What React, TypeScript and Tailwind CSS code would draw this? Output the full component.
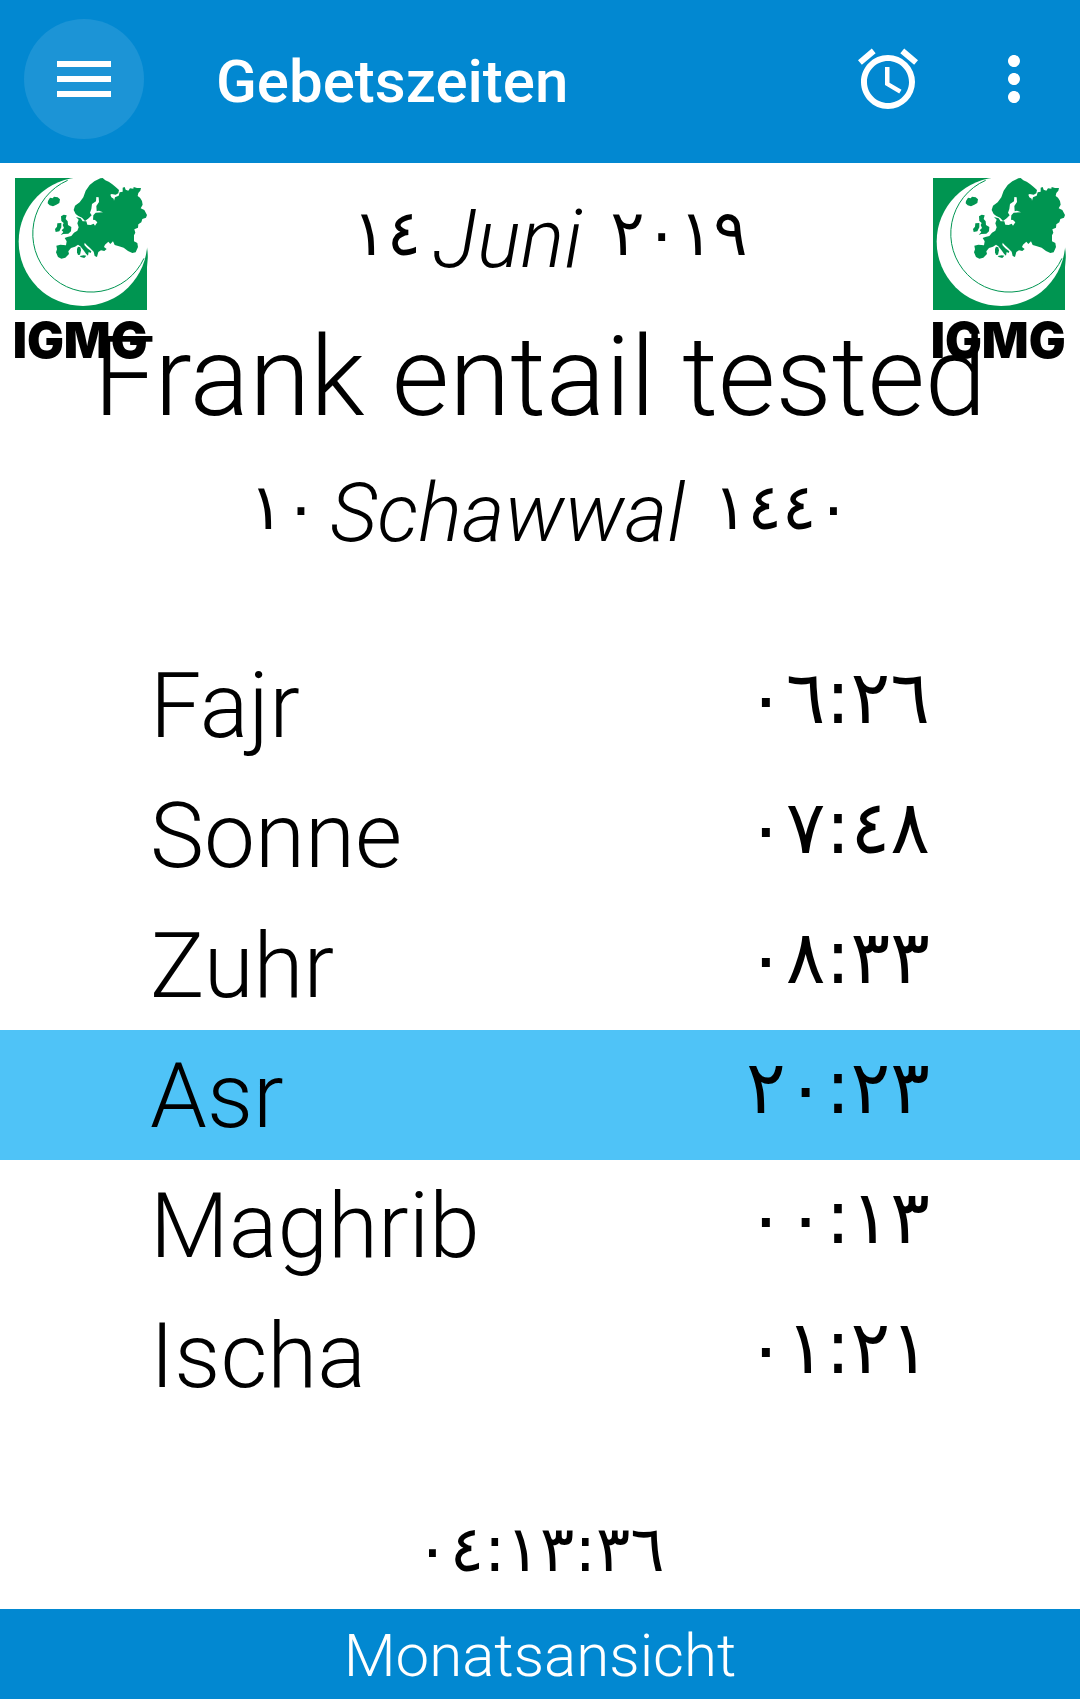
import React from "react";
import { MdAccessAlarm, MdMenu, MdMoreVert } from "react-icons/md";

const prayers = [
  { name: "Fajr", time: "٠٦:٢٦" },
  { name: "Sonne", time: "٠٧:٤٨" },
  { name: "Zuhr", time: "٠٨:٣٣" },
  { name: "Asr", time: "٢٠:٢٣", active: true },
  { name: "Maghrib", time: "٠٠:١٣" },
  { name: "Ischa", time: "٠١:٢١" },
];

function Logo() {
  return (
    <svg viewBox="45 39 396 544" className="w-[132px] overflow-visible" role="img" aria-label="IGMG">
      <rect x="45" y="39" width="396" height="396" fill="#009551" />
      <path d="M235 38H442V246L249 230Z" fill="#fff" />
      <circle cx="249" cy="230" r="193" fill="#fff" />
      <path d="M203 46A175 175 0 1 0 432 280" fill="none" stroke="#009551" strokeWidth="3" />
      <path d="M402 394A193 193 0 0 0 441 246V435H350Z" fill="#009551" />
      <path
        fill="#009551"
        d="M308 39L316 46L326 50L336 57L346 65L357 75L355 85L347 89L335 87L331 89L334 97L341 101L342 107L345 97L356 92L359 82L368 80L368 68L374 66L377 74L385 77L390 70L400 71L401 66L411 69L423 69L421 77L415 84L413 93L420 98L426 108L428 119L422 130L433 135L441 150L438 158L427 162L424 172L415 178L414 188L403 193L406 203L402 211L402 229L412 234L414 246L407 262L397 264L384 258L371 248L357 244L344 240L339 229L331 237L325 230L315 239L312 246L320 252L313 258L303 256L295 261L291 276L284 273L281 260L270 249L260 240L254 233L253 240L262 250L274 259L272 264L266 261L264 272L258 266L250 255L241 244L234 239L225 245L213 249L205 259L207 267L196 278L184 281L174 276L168 262L171 253L169 242L181 239L198 241L200 229L194 219L202 216L214 213L222 203L232 197L236 187L232 175L236 164L228 156L242 160L248 169L259 169L262 179L272 180L281 176L285 182L292 172L285 165L279 164L280 151L287 143L309 142L297 137L290 139L289 123L297 111L296 97L289 96L288 109L276 117L274 132L270 143L275 151L266 160L255 168L246 158L235 153L227 147L221 135L225 122L239 112L250 97L257 77L269 60L283 49L301 40Z"
      />
      <path fill="#009551" d="M144 108L150 98L158 100L162 95L173 97L180 103L178 114L169 119L159 124L149 121L143 115Z" />
      <path fill="#009551" d="M183 154L191 149L200 151L197 162L203 169L204 180L214 186L213 199L205 206L190 207L182 210L190 201L185 196L192 189L188 180L191 174L184 168Z" />
      <path fill="#009551" d="M172 175L184 174L184 187L178 199L167 201L165 192L171 185Z" />
      <path fill="#009551" d="M234 245L241 247L243 256L240 269L234 270L231 262L231 252Z" />
      <path fill="#009551" d="M239 273L251 271L259 272L253 279L242 276Z" />
      <text x="38" y="578" fontSize="147" fontWeight="900" fontFamily="Inter, sans-serif">
        IGMG
      </text>
    </svg>
  );
}

function Numerals({ children, className }: { children: string; className: string }) {
  return (
    <span className={`font-['DejaVu_Sans',sans-serif] leading-none font-normal not-italic ${className}`}>
      {children}
    </span>
  );
}

export default function App() {
  return (
    <div className="flex min-h-screen flex-col bg-white font-[Roboto,sans-serif] font-light text-black">
      <header className="flex h-[163px] items-center bg-[#0288d1] pr-[30px] pb-1.5 pl-6 text-white">
        <button aria-label="Menü" className="flex size-[120px] items-center justify-center rounded-full bg-[#1c94d6]">
          <MdMenu size={72} />
        </button>
        <h1 className="ml-[72px] flex-1 pt-1.5 text-[60px] leading-none font-medium">Gebetszeiten</h1>
        <button aria-label="Wecker">
          <MdAccessAlarm size={72} />
        </button>
        <button aria-label="Weitere Optionen" className="ml-[54px]">
          <MdMoreVert size={72} />
        </button>
      </header>

      <main className="relative flex flex-1 flex-col">
        <div className="absolute top-[15px] left-[15px]">
          <Logo />
        </div>
        <div className="absolute top-[15px] right-[15px]">
          <Logo />
        </div>

        <section className="relative flex flex-col items-center pt-7">
          <p className="flex h-24 items-center gap-3 pl-5 text-[82px] leading-none italic">
            <Numerals className="pb-3 text-[64px]">١٤</Numerals>
            <span>Juni</span>
            <Numerals className="ml-4 pb-3 text-[64px]">٢٠١٩</Numerals>
          </p>
          <h2 className="mt-[18px] text-[111px] leading-[144px] whitespace-nowrap">Frank entail tested</h2>
          <p className="mt-4 flex h-24 items-center gap-3 pl-5 text-[82px] leading-none italic">
            <Numerals className="pb-3 text-[64px]">١٠</Numerals>
            <span>Schawwal</span>
            <Numerals className="ml-4 pb-3 text-[64px]">١٤٤٠</Numerals>
          </p>
        </section>

        <ul className="mt-[79px]">
          {prayers.map((p) => (
            <li
              key={p.name}
              className={`flex h-[130px] items-center justify-between px-[150px] ${p.active ? "bg-[#4fc3f7]" : ""}`}
            >
              <span className="pt-0.5 text-[91px] leading-none">{p.name}</span>
              <Numerals className="pb-4 text-[74px]">{p.time}</Numerals>
            </li>
          ))}
        </ul>

        <p className="mt-auto mb-7 text-center">
          <Numerals className="text-[64px]">٠٤:١٣:٣٦</Numerals>
        </p>
      </main>

      <button className="h-[90px] bg-[#0288d1] pt-1 text-[60px] leading-none text-white">Monatsansicht</button>
    </div>
  );
}
